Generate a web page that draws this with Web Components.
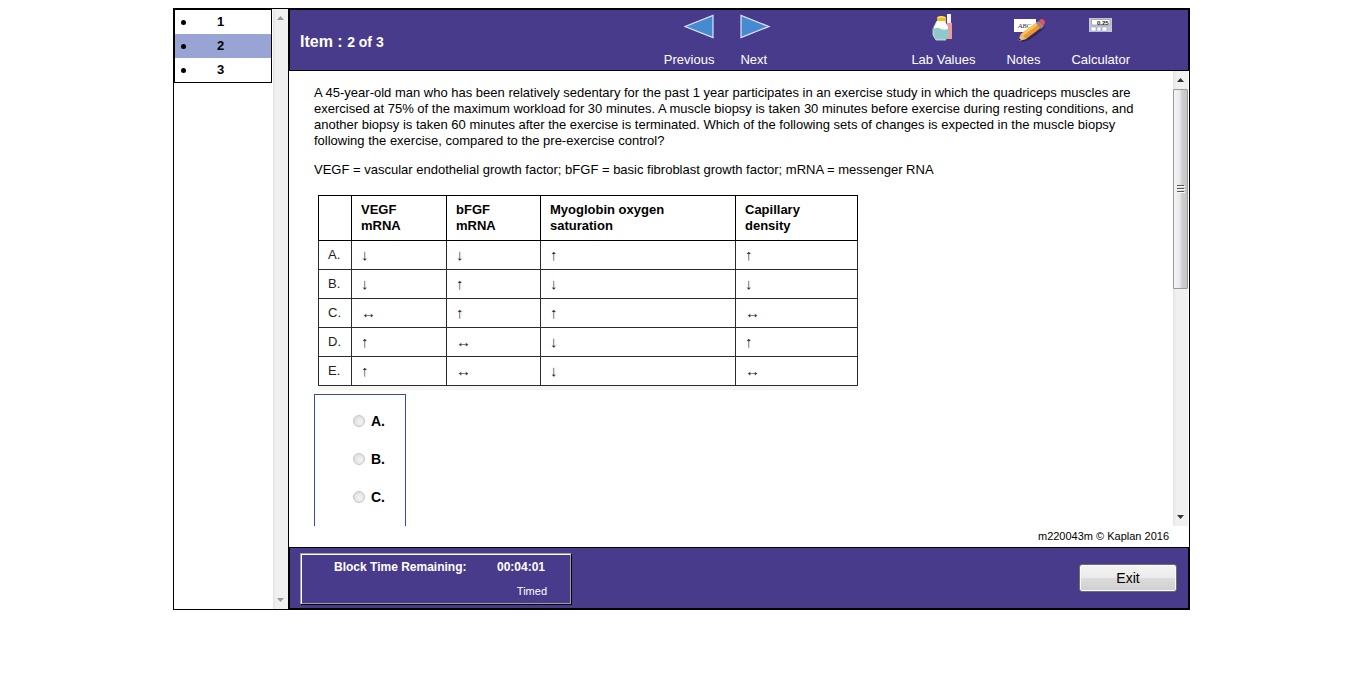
<!DOCTYPE html>
<html lang="en">
<head>
<meta charset="utf-8">
<title>Exam item 2 of 3</title>
<style>
body{margin:0;background:#fff;color:#000;font:13px/16px "Liberation Sans",Arial,sans-serif}
</style>
</head>
<body>
<exam-app></exam-app>
<script>
const define=(name,html,init)=>{
  const t=document.createElement('template');
  t.innerHTML=html;
  customElements.define(name,class extends HTMLElement{
    connectedCallback(){
      if(this.shadowRoot)return;
      this.attachShadow({mode:'open'}).append(t.content.cloneNode(true));
      if(init)init(this,this.shadowRoot);
    }
  });
};

define('scroll-rail',`
<style>
:host{display:flex;flex-direction:column;width:15px;background:linear-gradient(90deg,#e4e4e4,#f0f0f0 3px,#f0f0f0)}
button{border:0;padding:0;background:none;height:18px;display:flex;justify-content:center;align-items:center}
.track{flex:1}
.thumb{display:none;box-sizing:border-box;height:200px;border:1px solid #989898;border-radius:1px;background:linear-gradient(90deg,#f6f6f6,#e8e8ea 45%,#cfcfd3 60%,#c4c4c9);align-items:center;justify-content:center}
:host([thumb]) .thumb{display:flex}
svg{display:block}
.arrow{fill:#999}
:host([thumb]) .arrow{fill:#333}
</style>
<button aria-label="Scroll up"><svg class="arrow" width="7" height="4"><path d="M0 4L3.5 0L7 4Z"/></svg></button>
<div class="track"><div class="thumb"><svg width="8" height="11"><path d="M0 1.5H7M0 4.500H7M0 7.500H7" stroke="#555"/><path d="M1 2.500H8M1 5.500H8M1 8.500H8" stroke="#fff"/></svg></div></div>
<button aria-label="Scroll down"><svg class="arrow" width="7" height="4"><path d="M0 0L3.5 4L7 0Z"/></svg></button>`);

define('item-list',`
<style>
:host{display:flex;justify-content:space-between;width:114px;border-right:1px solid #000}
ul{list-style:none;box-sizing:border-box;margin:0;padding:0;width:98px;border:1px solid #000;align-self:flex-start}
a{display:flex;align-items:center;height:24px;padding-left:6px;color:#000;font-weight:bold;text-decoration:none}
a::before{content:"";width:5px;height:5px;border-radius:50%;background:#000}
a span{flex:1;text-align:center;padding-right:16px}
a[aria-current]{background:#98a4d4}
</style>
<ul><li><a href="#1"><span>1</span></a></li><li><a href="#2" aria-current="page"><span>2</span></a></li><li><a href="#3"><span>3</span></a></li></ul>
<scroll-rail></scroll-rail>`);

define('tool-button',`
<style>
:host{display:block}
button{display:flex;flex-direction:column;align-items:var(--side,center);padding:0;border:0;background:none;color:#fff;font:inherit;line-height:16px;white-space:nowrap}
.icon{display:block;height:41px}
</style>
<button><span class="icon"><slot name="icon"></slot></span><slot></slot></button>`);

define('exam-header',`
<style>
:host{display:flex;box-sizing:border-box;height:62px;border:1px solid #000;background:#483b8b;color:#fff;padding:1px 58px 0 10px}
h1{flex:1;margin:0;font-size:16px;line-height:62px;font-weight:bold}
h1 span{font-size:14px}
nav,.tools{display:flex}
nav{gap:26px;margin-right:141px}
.tools{gap:31px}
svg{display:block;overflow:visible}
.prev{--side:flex-end}.next{--side:flex-start}
</style>
<h1>Item : <span>2 of 3</span></h1>
<nav>
<tool-button class="prev"><svg slot="icon" width="30" height="32"><path d="M1 15.500L29 4.500V26.500Z" fill="#468bd0" stroke="#dde5f4" stroke-width="1.2"/></svg>Previous</tool-button>
<tool-button class="next"><svg slot="icon" width="30" height="32"><path d="M29 15.500L1 4.500V26.500Z" fill="#468bd0" stroke="#dde5f4" stroke-width="1.2"/></svg>Next</tool-button>
</nav>
<div class="tools">
<tool-button><svg slot="icon" width="22" height="32">
<rect x="15" y="3" width="4" height="25" fill="#f6f3fa"/><path d="M15 12H20V28H15Z" fill="#f39a98"/>
<path d="M5 6Q9 4 14 6V11H5Z" fill="#eabd25"/><path d="M6 6.500Q9 5 13 6.500" stroke="#fff0a0" fill="none"/>
<path d="M5 10H13L16 16V20H2V16Z" fill="#fff"/><path d="M1 19Q4 15 9 18Q14 20 17 17V24L14 29H4L1 24Z" fill="#90c9ca"/><path d="M5 10L1 18V24L4 29H14" fill="none" stroke="#d9eef0" stroke-width=".8"/></svg>Lab Values</tool-button>
<tool-button><svg slot="icon" width="34" height="32" viewBox="-8 0 34 32">
<path d="M0 8H22V21H0Z" fill="#fff"/><text x="4" y="17" font-family="Liberation Serif" font-size="7" font-style="italic" fill="#333">ABC</text>
<path d="M7 31Q17 31 31 16L30 14L9 28Z" fill="#251f48" opacity=".65"/>
<path d="M4 30L7 23L23 11L28 16L12 28Z" fill="#eb982d"/><path d="M7 23L23 11L25 13L9 25Z" fill="#ffc35c"/><path d="M4 30L7 23L12 28Z" fill="#e3bf8d"/><path d="M4 30L5 27L7 29Z" fill="#222"/>
<path d="M22 12L25 10L30 15L27 18Z" fill="#8c8894"/><path d="M25 10L27 8Q31 8 31 12L29 15Z" fill="#e6515f"/></svg>Notes</tool-button>
<tool-button><svg slot="icon" width="23" height="32"><rect y="7" width="23" height="14" fill="#c3c8cc"/><path d="M2.500 8.500H21V14H2.500Z" fill="#fff" stroke="#78819b" stroke-width=".6"/><text x="8" y="13.500" font-family="Liberation Sans" font-size="6" font-weight="bold" fill="#222">0.25</text><path d="M2 16H7V20H2ZM8 16H12V20H8ZM13 16H18V20H13Z" fill="#fff" stroke="#7d8fd0" stroke-width=".5"/></svg>Calculator</tool-button>
</div>`);

define('change-table',`
<style>
:host{display:block;width:540px;margin:14px 0 4px 4px;padding-top:3px;border-bottom:4px solid #f5f5f5}
table{border-collapse:collapse;table-layout:fixed;width:540px;margin:0}
th,td{box-sizing:border-box;border:1px solid #2b2b2b;padding:0 9px;text-align:left;vertical-align:middle}
thead td,thead th{border-color:#000;height:45px;font-weight:bold;line-height:16px}
tbody td,tbody th{height:29px;font-weight:normal;color:#222}
tbody td{font-size:15px}
</style>
<table>
<colgroup><col style="width:33px"><col style="width:95px"><col style="width:94px"><col style="width:195px"><col></colgroup>
<thead><tr><td></td><th scope="col">VEGF<br>mRNA</th><th scope="col">bFGF<br>mRNA</th><th scope="col">Myoglobin oxygen<br>saturation</th><th scope="col">Capillary<br>density</th></tr></thead>
<tbody></tbody></table>`,(el,root)=>{
  const rows={A:'↓↓↑↑',B:'↓↑↓↓',C:'↔↑↑↔',D:'↑↔↓↑',E:'↑↔↓↔'};
  root.querySelector('tbody').innerHTML=Object.entries(rows).map(([k,v])=>
    `<tr><th scope="row">${k}.</th>${[...v].map(c=>`<td>${c}</td>`).join('')}</tr>`).join('');
});

define('answer-options',`
<style>
:host{display:flex;flex-direction:column;flex:1;box-sizing:border-box;width:92px;border:1px solid #34509e;border-bottom:0;padding:7px 0 0 38px}
label{display:flex;align-items:center;gap:6px;height:38px;font-weight:bold;font-size:14px;flex:none}
input{appearance:none;box-sizing:border-box;width:12px;height:12px;margin:0;border:1px solid #c4c4c4;border-radius:50%;background:radial-gradient(circle at 60% 60%,#f4f4f4,#d8d8d8)}
</style>
<label><input type="radio" name="answer">A.</label>
<label><input type="radio" name="answer">B.</label>
<label><input type="radio" name="answer">C.</label>`);

define('exam-question',`
<style>
:host{display:flex;flex-direction:column;flex:1;min-height:0}
.view{display:flex;flex:1;min-height:0;padding-right:1px}
article{flex:1;display:flex;flex-direction:column;min-width:0;overflow:hidden;padding:14px 12px 0 25px}
p{margin:0 0 13px}
p+p{margin:0}
footer{flex:none;height:21px;line-height:20px;font-size:11px;text-align:right;padding-right:20px}
</style>
<div class="view"><article>
<p>A 45-year-old man who has been relatively sedentary for the past 1 year participates in an exercise study in which the quadriceps muscles are exercised at 75% of the maximum workload for 30 minutes. A muscle biopsy is taken 30 minutes before exercise during resting conditions, and another biopsy is taken 60 minutes after the exercise is terminated. Which of the following sets of changes is expected in the muscle biopsy following the exercise, compared to the pre-exercise control?</p>
<p>VEGF = vascular endothelial growth factor; bFGF = basic fibroblast growth factor; mRNA = messenger RNA</p>
<change-table></change-table>
<answer-options></answer-options>
</article><scroll-rail thumb></scroll-rail></div>
<footer>m220043m © Kaplan 2016</footer>`);

define('exam-footer',`
<style>
:host{display:flex;justify-content:space-between;align-items:flex-start;box-sizing:border-box;height:62px;border:1px solid #000;background:#483b8b;color:#fff;padding:5px 11px 0 10px}
.timer{box-sizing:border-box;width:272px;height:52px;border:1px solid;border-color:#a0a0a0 #000 #000 #a0a0a0}
.inner{box-sizing:border-box;height:50px;border:1px solid;border-color:#fff #a0a0a0 #a0a0a0 #fff;padding:4px 23px 0 32px;font-size:12px}
.row{display:flex;justify-content:space-between;font-weight:bold;padding-right:2px}
.mode{text-align:right;font-size:11px;margin-top:8px}
.exit{box-sizing:border-box;width:98px;height:28px;margin-top:11px;border:1px solid #707070;border-radius:3px;background:linear-gradient(#f3f3f3,#ebebeb 50%,#dcdcdc 50%,#cfcfcf);box-shadow:inset 0 0 0 1px #fafafa;color:#000;font:14px "Liberation Sans",Arial,sans-serif;padding:0}
</style>
<div class="timer"><div class="inner"><div class="row"><span>Block Time Remaining:</span><span>00:04:01</span></div><div class="mode">Timed</div></div></div>
<button class="exit">Exit</button>`);

define('exam-app',`
<style>
:host{display:grid;grid-template-columns:173fr 1017fr 176fr;padding-top:8px}
.frame{grid-column:2;display:flex;box-sizing:border-box;height:calc(100vh - 95px);min-height:480px;border:1px solid #000}
main{flex:1;min-width:0;display:flex;flex-direction:column}
</style>
<div class="frame"><item-list></item-list><main><exam-header></exam-header><exam-question></exam-question><exam-footer></exam-footer></main></div>`);
</script>
</body>
</html>
